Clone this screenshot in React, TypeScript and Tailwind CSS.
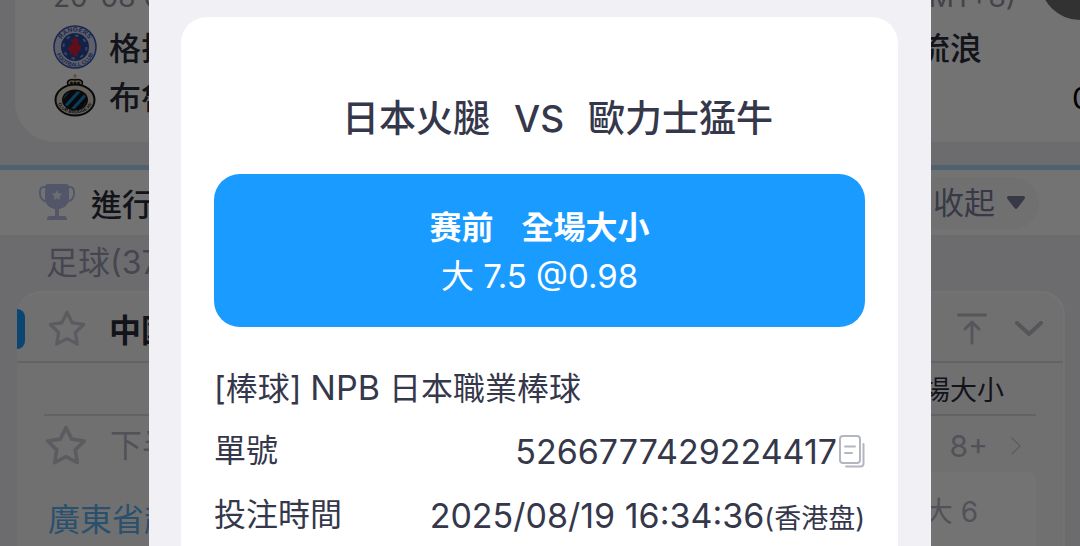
import { FiChevronRight, FiStar } from "react-icons/fi";

const RangersLogo = () => (
  <svg viewBox="0 0 44 44" className="size-11 shrink-0" aria-hidden="true">
    <defs>
      <path id="rangersTop" d="M6.500 22a15.500 15.500 0 0 1 31 0" />
      <path id="rangersBottom" d="M2.500 22a19.500 19.500 0 0 0 39 0" />
    </defs>
    <circle cx="22" cy="22" r="21" fill="#d6d8e6" stroke="#3a56b8" strokeWidth="1.500" />
    <circle cx="22" cy="22" r="14" fill="#2c4a9c" />
    <circle cx="22" cy="22" r="11.500" fill="none" stroke="#7f96d4" strokeWidth="2" strokeDasharray="3.500 5.500" />
    <circle cx="22" cy="22" r="8.500" fill="#2c4a9c" />
    <path
      d="M20 14l4-1 2 3-1 3 3 2-1 5-3 1 1 4h-4l-1-3-3 2v-4l-2-2 2-4 3-1-2-3z"
      fill="#d8203f"
    />
    <g fill="#3a56b8" fontSize="6.500" fontWeight="700" fontFamily="Liberation Sans, sans-serif" textAnchor="middle">
      <text>
        <textPath href="#rangersTop" startOffset="50%">RANGERS</textPath>
      </text>
      <text fontSize="5.500">
        <textPath href="#rangersBottom" startOffset="50%">FOOTBALL CLUB</textPath>
      </text>
    </g>
  </svg>
);

const BruggeLogo = () => (
  <svg viewBox="0 0 44 44" className="size-11 shrink-0" aria-hidden="true">
    <defs>
      <clipPath id="bruggeClip">
        <ellipse cx="22" cy="26" rx="11.500" ry="9" />
      </clipPath>
      <path id="bruggeText" d="M4 25a18 14.500 0 0 0 36 0" />
    </defs>
    <path d="M22 0v6M20 2h4" stroke="#c9a869" strokeWidth="1.200" />
    <path d="M15 11c-2-5 3-6 7-5 4-1 9 0 7 5l-2 3H17z" fill="#c9b78e" stroke="#15161c" strokeWidth="1.500" />
    <circle cx="18.500" cy="9" r="1.300" fill="#15161c" />
    <circle cx="22" cy="9" r="1.300" fill="#15161c" />
    <circle cx="25.500" cy="9" r="1.300" fill="#15161c" />
    <ellipse cx="22" cy="26" rx="19.500" ry="15.500" fill="#ded6c2" stroke="#15161c" strokeWidth="2" />
    <ellipse cx="22" cy="26" rx="13" ry="10.500" fill="#15161c" />
    <g clipPath="url(#bruggeClip)" stroke="#1688c9" strokeWidth="3">
      <path d="M4 30L20 12M9 36L29 14M17 38L36 17M25 40L42 21" />
    </g>
    <text fill="#15161c" fontSize="4.500" fontWeight="700" fontFamily="Liberation Sans, sans-serif" textAnchor="middle">
      <textPath href="#bruggeText" startOffset="50%">CLUB BRUGGE KV</textPath>
    </text>
  </svg>
);

const TrophyIcon = () => (
  <svg viewBox="0 0 36 37" className="h-[37px] w-9 shrink-0" aria-hidden="true">
    <path d="M8 3H5C1 3 1 6 1 10s3 8 9 8M28 3h3c4 0 4 3 4 7s-3 8-9 8" fill="none" stroke="#b6bfe6" strokeWidth="2" />
    <path d="M9 0h18c2 0 3 1 3 3v11c0 6-4 10-10 11v7h5c2 0 3 1 3 4H8c0-3 1-4 3-4h5v-7C10 24 6 20 6 14V3c0-2 1-3 3-3z" fill="#b6bfe6" />
    <path d="M18 6l1.600 3.300 3.600.5-2.600 2.500.6 3.600L18 14.200l-3.200 1.700.6-3.600-2.600-2.500 3.600-.5z" fill="#eef1ff" />
  </svg>
);

const ToTopIcon = () => (
  <svg viewBox="0 0 30 32" className="h-8 w-[30px]" fill="none" stroke="#bcbdc8" strokeWidth="3" strokeLinecap="round" strokeLinejoin="round" aria-hidden="true">
    <path d="M1.500 2h27M15 30V10M8 16l7-7 7 7" />
  </svg>
);

const ChevronIcon = () => (
  <svg viewBox="0 0 28 16" className="h-4 w-7" fill="none" stroke="#bcbdc8" strokeWidth="4" strokeLinecap="round" strokeLinejoin="round" aria-hidden="true">
    <path d="M2 2l12 11L26 2" />
  </svg>
);

const CopyIcon = () => (
  <svg viewBox="0 0 26 34" className="h-[34px] w-[26px]" fill="none" stroke="#b4b6c2" strokeWidth="2" strokeLinecap="round" aria-hidden="true">
    <rect x="1" y="2" width="20" height="27" rx="3" />
    <path d="M24.500 10v19.500a3 3 0 0 1-3 3H7" />
    <path d="M6 12.500h10M6 19h7" />
  </svg>
);

const Background = () => (
  <div className="bg-[#f0f0f5] text-[32px] leading-[48px] text-[#2c2e3a]">
    <div className="-mt-8 ml-[15px] h-[174px] rounded-bl-[40px] bg-white pt-2 pr-[64px] pl-[38px]">
      <div className="flex h-[46px] justify-between text-[28px] leading-[42px] text-[#9698a3]">
        <span>20-08 03:00</span>
        <span>(GMT+8)</span>
      </div>
      <div className="flex h-[50px] items-center gap-3 font-medium">
        <RangersLogo />
        <span className="pt-1">格拉</span>
        <span className="ml-auto pt-1 pr-[34px]">流浪</span>
      </div>
      <div className="flex h-12 items-center gap-3 font-medium">
        <BruggeLogo />
        <span className="pt-1">布魯</span>
      </div>
    </div>

    <div className="mt-[23px] flex h-[70px] items-center border-t-[5px] border-[#b0d8f4] bg-white pr-[41px] pl-[39px]">
      <TrophyIcon />
      <h2 className="ml-4 pt-1 text-[31px] font-medium">進行</h2>
      <button className="ml-auto flex h-[52px] items-center gap-3 rounded-full bg-[#f8f8fa] pr-[14px] pl-6 text-[31px] text-[#7c7e9c]">
        收起
        <svg viewBox="0 0 18 13" className="h-[13px] w-[18px]" aria-hidden="true">
          <path d="M2 0h14c2 0 2.500 1.500 1.500 3l-7 9c-1 1.300-2 1.300-3 0l-7-9C-.5 1.500 0 0 2 0z" fill="#7c7e9c" />
        </svg>
      </button>
    </div>

    <div className="flex h-14 items-center pl-[46px] text-[#9a9cb2]">足球(37)</div>

    <div className="mr-[15px] ml-[17px] h-[300px] rounded-t-[24px] border-t-2 border-r-2 border-white bg-[#f9f9fb]">
      <div className="flex h-[70px] items-center border-b-2 border-[#dcdce2] pt-1 pr-5">
        <span className="h-10 w-2 rounded-r-full bg-[#1a9bff]" />
        <FiStar className="mx-[22px] size-10 shrink-0 text-[#cbccd6]" strokeWidth={2} />
        <h3 className="pt-1 font-bold">中國</h3>
        <button className="ml-auto" aria-label="Top">
          <ToTopIcon />
        </button>
        <button className="ml-7" aria-label="Collapse">
          <ChevronIcon />
        </button>
      </div>
      <div className="mr-[27px] ml-[27px]">
        <div className="flex h-[53px] items-center justify-end border-b-2 border-[#dcdce2] pt-1 pr-8 text-[27px]">全場大小</div>
        <div className="flex h-14 items-center pt-1 text-[#b4b5c2]">
          <FiStar className="mr-[22px] size-11 shrink-0 text-[#cbccd6]" strokeWidth={2} />
          下半
          <span className="ml-auto text-[30px]">8+</span>
          <FiChevronRight className="mr-1 ml-3 size-8 text-[#cbccd6]" strokeWidth={1} />
        </div>
        <div className="flex h-20 items-start justify-between">
          <span className="pt-6 pl-1 text-[#5cb2f0]">廣東省超</span>
          <span className="rounded-lg bg-white py-4 pr-[58px] pl-8 text-[28px] text-[#b4b5c2]">大 6</span>
        </div>
      </div>
    </div>
  </div>
);

const BetDialog = () => (
  <div role="dialog" className="flex w-full max-w-[782px] flex-col bg-[#f0f0f5] pt-[17px] pr-[33px] pl-8 text-[32px] text-[#35374a]">
    <div className="flex-1 rounded-t-[26px] bg-white px-[33px] pt-[78px]">
      <h1 className="flex justify-center gap-6 pb-[31px] pl-9 text-[37px] leading-[48px] font-medium">
        <span>日本火腿</span>
        <span>VS</span>
        <span>歐力士猛牛</span>
      </h1>
      <div className="rounded-[26px] bg-[#1a9bff] pt-[30px] pb-[27px] text-center leading-[48px] text-white">
        <p className="flex justify-center gap-7 font-bold">
          <span>赛前</span>
          <span>全場大小</span>
        </p>
        <p className="text-[33px]">大 7.5 @0.98</p>
      </div>
      <div className="mt-7">
        <div className="flex h-16 items-center">
          <p>
            [棒球] <span className="text-[34px]">NPB</span> 日本職業棒球
          </p>
        </div>
        <div className="flex h-16 items-center justify-between">
          <span>單號</span>
          <span className="flex items-center gap-[2px] text-[34px]">
            5266777429224417
            <button aria-label="Copy">
              <CopyIcon />
            </button>
          </span>
        </div>
        <div className="flex h-16 items-center justify-between">
          <span>投注時間</span>
          <span className="text-[34px]">
            2025/08/19 16:34:36<span className="text-[27px]">(香港盘)</span>
          </span>
        </div>
      </div>
    </div>
  </div>
);

export default function App() {
  return (
    <div className="relative h-screen overflow-hidden font-['Inter','Noto_Sans_CJK_TC',sans-serif] whitespace-nowrap">
      <Background />
      <span className="absolute -top-[60px] -right-10 size-20 rounded-full bg-[#707070]" />
      <span className="absolute top-[80px] left-full -ml-2 text-[30px] leading-9">0</span>
      <div className="absolute inset-0 flex justify-center bg-black/55">
        <BetDialog />
      </div>
    </div>
  );
}
